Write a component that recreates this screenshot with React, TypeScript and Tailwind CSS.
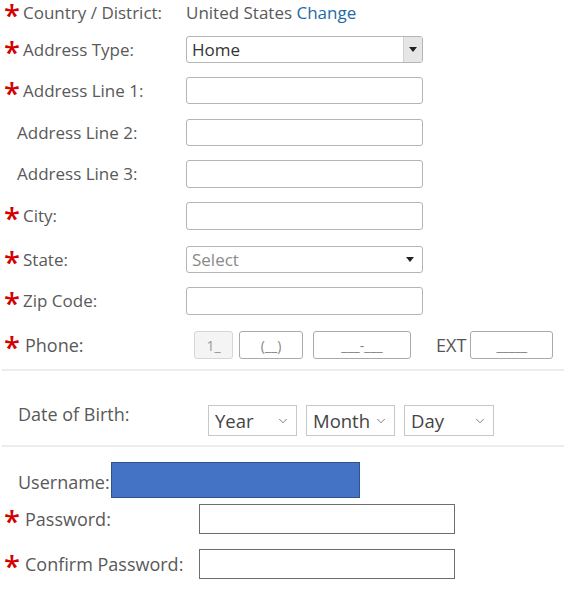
import { ChevronDown } from 'lucide-react'

const font = { fontFamily: '"Open Sans", "Noto Sans", sans-serif' }

function Star({ wide }: { wide?: boolean }) {
  return (
    <span
      className={`shrink-0 pl-[4px] mt-[4px] text-[29px] leading-[30px] font-semibold text-[#d40000] ${wide ? 'w-[25px]' : 'w-[23px]'}`}
    >
      *
    </span>
  )
}

function Label({
  required,
  text,
  width = 'w-[186px]',
  big,
}: {
  required?: boolean
  text: string
  width?: string
  big?: boolean
}) {
  return (
    <div className={`flex items-center shrink-0 ${width}`}>
      {required ? <Star wide={big} /> : <span className="w-[17px] shrink-0" />}
      <span className={`${big ? 'text-[18px]' : 'text-[17px]'} text-[#595959] whitespace-nowrap`}>{text}</span>
    </div>
  )
}

function TextBox() {
  return <div className="w-[237px] h-full rounded-[3px] border border-[#b5b5b5] bg-white" />
}

const rows: { label: string; required?: boolean; cls: string }[] = [
  { label: 'Address Line 1:', required: true, cls: 'mt-[14px] h-[27px]' },
  { label: 'Address Line 2:', cls: 'mt-[15px] h-[27px]' },
  { label: 'Address Line 3:', cls: 'mt-[14px] h-[28px]' },
  { label: 'City:', required: true, cls: 'mt-[14px] h-[28px]' },
]

function DobSelect({ text, width }: { text: string; width: string }) {
  return (
    <div className={`flex items-center justify-between h-full border border-[#c8c8c8] bg-white pl-[6px] pr-[6px] ${width}`}>
      <span className="text-[18.5px] text-[#444]">{text}</span>
      <ChevronDown className="h-[14px] w-[14px] text-[#555]" strokeWidth={1.3} />
    </div>
  )
}

export default function App() {
  return (
    <div className="w-[564px] h-[592px] bg-white" style={font}>
      <div className="flex items-center h-[26px]">
        <Label required text="Country / District:" />
        <span className="text-[17px] text-[#595959]">
          United States <span className="text-[#1f6aa5]">Change</span>
        </span>
      </div>

      <div className="flex items-center mt-[10px] h-[27px]">
        <Label required text="Address Type:" />
        <div className="flex h-full w-[237px] rounded-[3px] border border-[#b5b5b5] bg-white overflow-hidden">
          <span className="flex-1 pl-[5px] text-[17px] leading-[26px] text-[#333]">Home</span>
          <div className="flex w-[19px] items-center justify-center border-l border-[#d0d0d0] bg-[#e6e6e6]">
            <span className="w-0 h-0 border-l-[4px] border-r-[4px] border-t-[5px] border-l-transparent border-r-transparent border-t-[#222]" />
          </div>
        </div>
      </div>

      {rows.map((r) => (
        <div key={r.label} className={`flex items-center ${r.cls}`}>
          <Label required={r.required} text={r.label} />
          <TextBox />
        </div>
      ))}

      <div className="flex items-center mt-[16px] h-[27px]">
        <Label required text="State:" />
        <div className="flex items-center justify-between h-full w-[237px] rounded-[3px] border border-[#b5b5b5] bg-white pl-[5px] pr-[8px]">
          <span className="text-[17px] text-[#8a8a8a]">Select</span>
          <span className="w-0 h-0 border-l-[4px] border-r-[4px] border-t-[5px] border-l-transparent border-r-transparent border-t-[#222]" />
        </div>
      </div>

      <div className="flex items-center mt-[14px] h-[28px]">
        <Label required text="Zip Code:" />
        <TextBox />
      </div>

      <div className="flex items-center mt-[16px] h-[28px]">
        <Label required big text="Phone:" width="w-[194px]" />
        <div className="flex items-center h-full">
          <div className="flex items-center justify-center h-full w-[39px] rounded-[3px] border border-[#d6d6d6] bg-[#f4f4f4] text-[14px] text-[#999]">1_</div>
          <div className="ml-[6px] flex items-center justify-center h-full w-[64px] rounded-[3px] border border-[#aaa] text-[14px] text-[#888]">(__)</div>
          <div className="ml-[10px] flex items-center justify-center h-full w-[98px] rounded-[3px] border border-[#aaa] text-[14px] text-[#888]">___-___</div>
          <span className="ml-[25px] text-[18px] text-[#555]">EXT</span>
          <div className="ml-[4px] flex items-center justify-center h-full w-[83px] rounded-[3px] border border-[#aaa] text-[14px] text-[#888]">_____</div>
        </div>
      </div>

      <div className="mt-[10px] ml-[2px] border-t-2 border-[#ececec]" />

      <div className="flex mt-[34px] h-[31px]">
        <div className="w-[208px] shrink-0 pl-[18px] -mt-[4px] text-[18px] text-[#595959]">Date of Birth:</div>
        <div className="flex h-full gap-[9px]">
          <DobSelect text="Year" width="w-[89px]" />
          <DobSelect text="Month" width="w-[89px]" />
          <DobSelect text="Day" width="w-[90px]" />
        </div>
      </div>

      <div className="mt-[9px] ml-[2px] border-t-2 border-[#ececec]" />

      <div className="flex items-end mt-[15px] h-[36px]">
        <span className="pl-[18px] w-[111px] pb-[2px] text-[18px] text-[#595959] whitespace-nowrap">Username:</span>
        <div className="h-full w-[249px] border border-[#2f528f] bg-[#4472c4]" />
      </div>

      <div className="flex items-center mt-[6px] h-[30px]">
        <Label required big text="Password:" width="w-[199px]" />
        <div className="h-full w-[256px] border border-[#6e6e6e] bg-white" />
      </div>

      <div className="flex items-center mt-[15px] h-[30px]">
        <Label required big text="Confirm Password:" width="w-[199px]" />
        <div className="h-full w-[256px] border border-[#6e6e6e] bg-white" />
      </div>
    </div>
  )
}
